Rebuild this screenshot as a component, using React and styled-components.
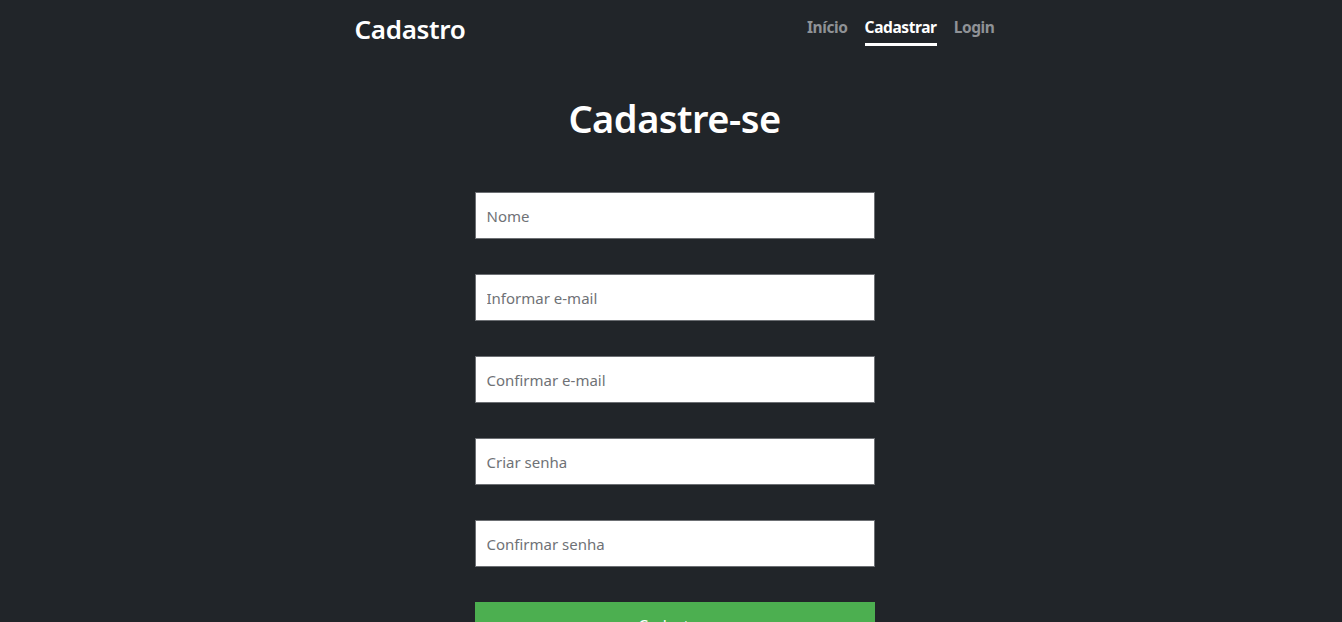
import React from 'react';
import styled, { createGlobalStyle } from 'styled-components';

const GlobalStyle = createGlobalStyle`
  body {
    margin: 0;
    padding-left: 7px;
    background: #212529;
    font-family: 'Noto Sans', 'Open Sans', sans-serif;
    color: #fff;
  }
`;

const Header = styled.header`
  display: flex;
  justify-content: space-between;
  align-items: flex-start;
  width: 640px;
  margin: 0 auto;
  padding-top: 10px;
`;

const Logo = styled.h2`
  margin: 0;
  font-size: 26px;
  font-weight: 600;
  line-height: 38px;
  letter-spacing: -0.3px;
`;

const Nav = styled.nav`
  display: flex;
  gap: 17px;
  padding-top: 7px;
`;

const NavLink = styled.a`
  font-size: 15.5px;
  font-weight: 700;
  line-height: 20px;
  letter-spacing: -0.4px;
  color: ${(p) => (p.$active ? '#fff' : '#8f9296')};
  text-decoration: none;
  padding-bottom: 6px;
  border-bottom: 3px solid ${(p) => (p.$active ? '#fff' : 'transparent')};
`;

const Main = styled.main`
  display: flex;
  flex-direction: column;
  align-items: center;
`;

const Title = styled.h1`
  margin: 44px 0 48px;
  font-size: 38px;
  font-weight: 600;
  line-height: 52px;
  letter-spacing: -0.5px;
`;

const Form = styled.form`
  display: flex;
  flex-direction: column;
  gap: 35px;
  width: 400px;
`;

const Input = styled.input`
  box-sizing: border-box;
  width: 100%;
  height: 47px;
  padding: 0 11px;
  border: 1px solid #6c6f73;
  border-radius: 0;
  background: #fff;
  font-family: 'Noto Sans', 'Open Sans', sans-serif;
  font-size: 15px;
  outline: none;

  &::placeholder {
    color: #6f7276;
  }
`;

const Button = styled.button`
  height: 48px;
  border: none;
  background: #4caf50;
  color: #fff;
  font-family: 'Noto Sans', 'Open Sans', sans-serif;
  font-size: 16px;
`;

const fields = ['Nome', 'Informar e-mail', 'Confirmar e-mail', 'Criar senha', 'Confirmar senha'];

const App = () => {
  return (
    <>
      <GlobalStyle />
      <Header>
        <Logo>Cadastro</Logo>
        <Nav>
          <NavLink href="#">Início</NavLink>
          <NavLink href="#" $active>Cadastrar</NavLink>
          <NavLink href="#">Login</NavLink>
        </Nav>
      </Header>
      <Main>
        <Title>Cadastre-se</Title>
        <Form onSubmit={(e) => e.preventDefault()}>
          {fields.map((f) => (
            <Input key={f} placeholder={f} />
          ))}
          <Button type="submit">Cadastrar</Button>
        </Form>
      </Main>
    </>
  );
};

export default App;
